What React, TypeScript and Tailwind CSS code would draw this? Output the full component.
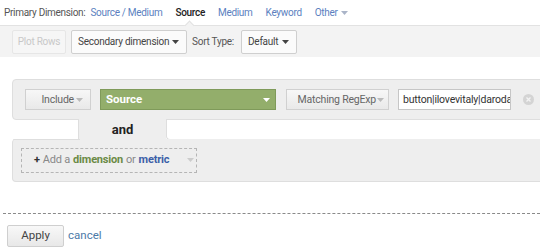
import React from "react";

const Caret = ({ className = "" }: { className?: string }) => (
  <svg width="7" height="4" viewBox="0 0 7 4" className={"shrink-0 " + className}>
    <path d="M0 0 L7 0 L3.5 4 Z" fill="currentColor" />
  </svg>
);

export default function App() {
  return (
    <div className="w-[540px] h-[250px] overflow-hidden bg-white relative whitespace-nowrap" style={{ fontFamily: "Roboto, 'Liberation Sans', sans-serif" }}>
      {/* Primary dimension row */}
      <div className="h-[25px] flex items-center pl-[4px] text-[10px] tracking-[-0.3px] text-[#555]">
        <span>Primary Dimension:</span>
        <span className="ml-[5px] text-[#5b7fc0]">Source / Medium</span>
        <span className="ml-[13px] text-[#222] font-medium">Source</span>
        <span className="ml-[13px] text-[#5b7fc0]">Medium</span>
        <span className="ml-[13px] text-[#5b7fc0]">Keyword</span>
        <span className="ml-[13px] text-[#5b7fc0] flex items-center gap-[3px]">Other<Caret className="text-[#aab4c8]" /></span>
      </div>
      {/* Toolbar */}
      <div className="h-[32px] bg-[#f3f3f3] border-t border-[#e2e2e2] flex items-center pl-[12px] relative text-[10px] tracking-[-0.25px]">
        <div className="absolute left-[186px] top-[-4px] w-[7px] h-[7px] bg-[#f3f3f3] border-l border-t border-[#e2e2e2] rotate-45" />
        <div className="h-[24px] w-[54px] shrink-0 flex items-center justify-center border border-[#e6e6e6] rounded-[2px] bg-[#f6f6f6] text-[#c8c8c8]">Plot Rows</div>
        <div className="ml-[5px] h-[24px] w-[116px] shrink-0 flex items-center justify-between pl-[6px] pr-[7px] border border-[#cfcfcf] rounded-[2px] bg-[#fbfbfb] text-[#444]">
          <span>Secondary dimension</span>
          <Caret className="text-[#444]" />
        </div>
        <span className="ml-[5px] text-[#555]">Sort Type:</span>
        <div className="ml-[7px] h-[24px] w-[56px] shrink-0 flex items-center justify-between pl-[6px] pr-[7px] border border-[#cfcfcf] rounded-[2px] bg-[#fbfbfb] text-[#444]">
          <span>Default</span>
          <Caret className="text-[#444]" />
        </div>
      </div>

      {/* Filter panel */}
      <div className="mt-[22px] ml-[12px] w-[560px]">
        <div className="h-[41px] bg-[#eeeeee] border border-[#dedede] rounded-[4px] flex items-center pl-[12px]">
          <div className="h-[21px] w-[66px] shrink-0 flex items-center justify-end pr-[7px] gap-[2px] border border-[#d0d0d0] bg-gradient-to-b from-[#f7f7f7] to-[#e9e9e9] text-[10.5px] tracking-[-0.2px] text-[#666]">
            Include<Caret className="text-[#bbb]" />
          </div>
          <div className="ml-[9px] h-[21px] w-[176px] shrink-0 flex items-center justify-between pl-[5px] pr-[5px] bg-[#93ae6b] border border-[#7f9a5a] text-white font-bold text-[11.5px]">
            <span>Source</span>
            <Caret className="text-white" />
          </div>
          <div className="ml-[10px] h-[21px] w-[103px] shrink-0 flex items-center justify-end pr-[4px] gap-[1px] border border-[#d0d0d0] bg-gradient-to-b from-[#f7f7f7] to-[#e9e9e9] text-[10.5px] tracking-[-0.2px] text-[#666]">
            Matching RegExp<Caret className="text-[#bbb]" />
          </div>
          <div className="ml-[9px] h-[21px] w-[113px] shrink-0 flex items-center pl-[4px] overflow-hidden bg-white border border-[#c6c6c6] text-[10.5px] tracking-[-0.2px] text-[#333]">
            button|ilovevitaly|darodar
          </div>
          <div className="ml-[12px] w-[11px] h-[11px] shrink-0 rounded-full bg-[#d4d4d4] flex items-center justify-center">
            <svg width="5" height="5" viewBox="0 0 5 5"><path d="M0.5 0.5 L4.5 4.5 M4.5 0.5 L0.5 4.5" stroke="#f3f3f3" strokeWidth="1.3" /></svg>
          </div>
        </div>
        <div className="h-[20px] flex">
          <div className="w-[67px] bg-white border-r border-[#dedede]" />
          <div className="w-[87px] bg-[#eeeeee] flex items-center justify-center font-bold text-[13px] text-[#222] -mt-[2px] pt-[2px]">and</div>
          <div className="flex-1 bg-white border-l border-[#dedede] border-b rounded-bl-[4px]" />
        </div>
        <div className="h-[43px] -mt-[1px] bg-[#eeeeee] border border-[#dedede] border-t-0 rounded-b-[4px] rounded-tl-[4px] flex items-center pl-[8px] relative">
          <div className="absolute left-0 top-0 w-[67px] border-t border-[#dedede] rounded-tl-[4px]" />
          <div className="h-[25px] w-[176px] border border-dashed border-[#b5b5b5] flex items-center pl-[12px] text-[11px] tracking-[-0.2px] text-[#888]">
            <span className="text-[#333] font-bold mr-[3px]">+</span>
            <span>Add a</span>
            <span className="ml-[3px] font-bold text-[#6a8a45]">dimension</span>
            <span className="ml-[3px]">or</span>
            <span className="ml-[3px] font-bold text-[#3c5fa8]">metric</span>
            <Caret className="ml-[18px] text-[#ccc]" />
          </div>
        </div>
      </div>

      {/* dashed separator */}
      <div className="mt-[31px] ml-[3px] border-t border-dashed border-[#8a8a8a]" />

      <div className="mt-[11px] ml-[7px] flex items-center">
        <div className="h-[22px] w-[57px] flex items-center justify-center border border-[#cfcfcf] rounded-[2px] bg-gradient-to-b from-[#f8f8f8] to-[#e8e8e8] text-[11.5px] text-[#444]">Apply</div>
        <span className="ml-[4px] text-[11.5px] text-[#4c7aa8]">cancel</span>
      </div>
    </div>
  );
}
